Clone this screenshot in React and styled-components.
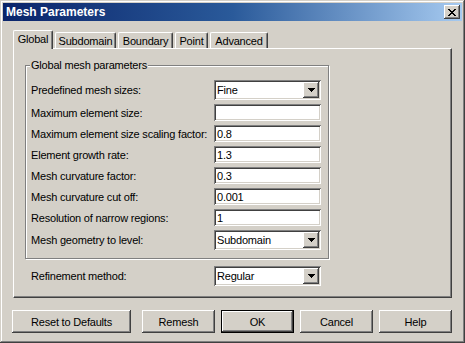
import { Fragment } from 'react'
import styled, { createGlobalStyle } from 'styled-components'

const GlobalStyle = createGlobalStyle`
  html, body {
    margin: 0;
    padding: 0;
    background: #d4d0c8;
  }
  * {
    box-sizing: border-box;
  }
`

const face = '#d4d0c8'
const raised = `
  box-shadow:
    inset -1px -1px 0 #404040,
    inset 1px 1px 0 #ffffff,
    inset -2px -2px 0 #808080,
    inset 2px 2px 0 ${face};
`
const sunken = `
  box-shadow:
    inset 1px 1px 0 #808080,
    inset -1px -1px 0 #ffffff,
    inset 2px 2px 0 #404040,
    inset -2px -2px 0 ${face};
`

const Window = styled.div`
  width: 465px;
  height: 343px;
  padding: 3px;
  background: ${face};
  font-family: "Liberation Sans", Arial, sans-serif;
  font-size: 11px;
  letter-spacing: -0.2px;
  color: #000;
  box-shadow:
    inset -1px -1px 0 #404040,
    inset 1px 1px 0 ${face},
    inset -2px -2px 0 #808080,
    inset 2px 2px 0 #ffffff;
  display: flex;
  flex-direction: column;
`

const TitleBar = styled.div`
  height: 18px;
  display: flex;
  align-items: center;
  justify-content: space-between;
  padding: 0 2px 0 3px;
  background: linear-gradient(to right, #0a246a 0%, #2a5a9a 50%, #a6caf0 100%);
`

const Title = styled.span`
  color: #fff;
  font-weight: bold;
  font-size: 12px;
  letter-spacing: 0;
`

const CloseButton = styled.div`
  width: 16px;
  height: 14px;
  background: ${face};
  ${raised}
  display: flex;
  align-items: center;
  justify-content: center;
`

const Client = styled.div`
  padding: 9px 10px 0;
  display: flex;
  flex-direction: column;
`

const TabStrip = styled.div`
  display: flex;
  align-items: flex-end;
  height: 18px;
  gap: 2px;
  position: relative;
  z-index: 1;
`

const Tab = styled.div`
  width: ${(p) => p.$w}px;
  height: ${(p) => (p.$active ? 19 : 16)}px;
  margin-bottom: ${(p) => (p.$active ? -1 : 0)}px;
  background: ${face};
  border-top: 1px solid #fff;
  border-left: 1px solid #fff;
  border-right: 1px solid #404040;
  border-radius: 2px 2px 0 0;
  box-shadow: inset -1px 0 0 #808080;
  display: flex;
  align-items: ${(p) => (p.$active ? 'flex-start' : 'center')};
  padding-top: ${(p) => (p.$active ? 2 : 0)}px;
  justify-content: center;
  white-space: nowrap;
`

const Panel = styled.div`
  height: 250px;
  background: ${face};
  border-top: 1px solid #fff;
  border-left: 1px solid #fff;
  border-right: 1px solid #404040;
  border-bottom: 1px solid #404040;
  box-shadow: inset -1px -1px 0 #808080;
  padding: 16px 0 0 11px;
`

const GroupBox = styled.div`
  position: relative;
  width: 304px;
  border: 1px solid #808080;
  box-shadow: inset 1px 1px 0 #fff, 1px 1px 0 #fff;
  padding: 14px 0 8px 5px;
`

const Legend = styled.span`
  position: absolute;
  top: -7px;
  left: 4px;
  padding: 0 1px;
  background: ${face};
  line-height: 13px;
`

const Rows = styled.div`
  display: grid;
  grid-template-columns: 183px 107px;
  row-gap: 4px;
  align-items: center;
`

const RefineRow = styled(Rows)`
  margin: 7px 0 0 6px;
`

const Label = styled.span`
  white-space: nowrap;
`

const TextBox = styled.div`
  height: 17px;
  background: #fff;
  ${sunken}
  padding: 0 3px;
  display: flex;
  align-items: center;
`

const Combo = styled.div`
  height: 20px;
  background: #fff;
  ${sunken}
  padding: 2px 2px 2px 3px;
  display: flex;
  align-items: center;
  justify-content: space-between;
`

const ArrowButton = styled.div`
  width: 16px;
  height: 16px;
  background: ${face};
  ${raised}
  display: flex;
  align-items: center;
  justify-content: center;
`

const ButtonRow = styled.div`
  display: flex;
  margin: 12px 0 0 -1px;
  gap: 6px;
`

const Button = styled.div`
  width: ${(p) => p.$w}px;
  height: 23px;
  margin-right: ${(p) => p.$mr || 0}px;
  background: ${face};
  ${(p) =>
    p.$default
      ? `border: 1px solid #000;
         box-shadow:
           inset -1px -1px 0 #404040,
           inset 1px 1px 0 #ffffff,
           inset -2px -2px 0 #808080;`
      : raised}
  display: flex;
  align-items: center;
  justify-content: center;
`

function Arrow() {
  return (
    <svg width="7" height="4" viewBox="0 0 7 4" shapeRendering="crispEdges">
      <path d="M0 0h7v1H0zM1 1h5v1H1zM2 2h3v1H2zM3 3h1v1H3z" fill="#000" />
    </svg>
  )
}

function CloseGlyph() {
  return (
    <svg width="8" height="7" viewBox="0 0 8 7" shapeRendering="crispEdges">
      <path
        d="M0 0h2v1H0zM6 0h2v1H6zM1 1h2v1H1zM5 1h2v1H5zM2 2h4v1H2zM3 3h2v1H3zM2 4h4v1H2zM1 5h2v1H1zM5 5h2v1H5zM0 6h2v1H0zM6 6h2v1H6z"
        fill="#000"
      />
    </svg>
  )
}

const tabs = [
  { name: 'Global', w: 40, active: true },
  { name: 'Subdomain', w: 61 },
  { name: 'Boundary', w: 55 },
  { name: 'Point', w: 33 },
  { name: 'Advanced', w: 58 },
]

const fields = [
  { label: 'Predefined mesh sizes:', value: 'Fine', combo: true },
  { label: 'Maximum element size:', value: '' },
  { label: 'Maximum element size scaling factor:', value: '0.8' },
  { label: 'Element growth rate:', value: '1.3' },
  { label: 'Mesh curvature factor:', value: '0.3' },
  { label: 'Mesh curvature cut off:', value: '0.001' },
  { label: 'Resolution of narrow regions:', value: '1' },
  { label: 'Mesh geometry to level:', value: 'Subdomain', combo: true },
]

function Field({ value, combo }) {
  if (combo) {
    return (
      <Combo>
        <span>{value}</span>
        <ArrowButton>
          <Arrow />
        </ArrowButton>
      </Combo>
    )
  }
  return <TextBox>{value}</TextBox>
}

export default function App() {
  return (
    <>
      <GlobalStyle />
      <Window>
        <TitleBar>
          <Title>Mesh Parameters</Title>
          <CloseButton>
            <CloseGlyph />
          </CloseButton>
        </TitleBar>
        <Client>
          <TabStrip>
            {tabs.map((t) => (
              <Tab key={t.name} $w={t.w} $active={t.active}>
                {t.name}
              </Tab>
            ))}
          </TabStrip>
          <Panel>
            <GroupBox>
              <Legend>Global mesh parameters</Legend>
              <Rows>
                {fields.map((f) => (
                  <Fragment key={f.label}>
                    <Label>{f.label}</Label>
                    <Field value={f.value} combo={f.combo} />
                  </Fragment>
                ))}
              </Rows>
            </GroupBox>
            <RefineRow>
              <Label>Refinement method:</Label>
              <Field value="Regular" combo />
            </RefineRow>
          </Panel>
          <ButtonRow>
            <Button $w={119} $mr={5}>Reset to Defaults</Button>
            <Button $w={73}>Remesh</Button>
            <Button $w={73} $default>OK</Button>
            <Button $w={73}>Cancel</Button>
            <Button $w={73}>Help</Button>
          </ButtonRow>
        </Client>
      </Window>
    </>
  )
}
